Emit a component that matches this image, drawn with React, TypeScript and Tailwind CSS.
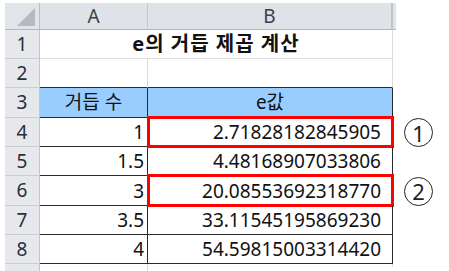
import React from "react";

const F = "font-['Noto_Sans','Noto_Sans_CJK_KR',sans-serif]";

type Row = { n: number; h: string; a?: string; b?: string; red?: boolean; mark?: string; kind: "title" | "blank" | "head" | "data" };

const rows: Row[] = [
  { n: 1, h: "h-[29px]", kind: "title" },
  { n: 2, h: "h-[29px]", kind: "blank" },
  { n: 3, h: "h-[30px]", kind: "head", a: "거듭 수", b: "e값" },
  { n: 4, h: "h-[29px]", kind: "data", a: "1", b: "2.71828182845905", red: true, mark: "1" },
  { n: 5, h: "h-[29px]", kind: "data", a: "1.5", b: "4.48168907033806" },
  { n: 6, h: "h-[30px]", kind: "data", a: "3", b: "20.08553692318770", red: true, mark: "2" },
  { n: 7, h: "h-[29px]", kind: "data", a: "3.5", b: "33.11545195869230" },
  { n: 8, h: "h-[29px]", kind: "data", a: "4", b: "54.59815003314420" },
];

function RowHead({ n, h }: { n: number; h: string }) {
  return (
    <div className={`${h} w-[35px] shrink-0 flex items-center justify-center bg-[#e6e8eb] border-r border-r-[#c3c7cc] border-b border-b-[#c9cdd2] text-[19px] text-[#27303b]`}>
      {n}
    </div>
  );
}

export default function App() {
  return (
    <div className={`w-[449px] h-[271px] bg-white overflow-hidden pl-[5px] pt-[3px] ${F}`}>
      {/* column header */}
      <div className="flex h-[27px]">
        <div className="w-[35px] shrink-0 bg-[#e1e4e8] border-r border-r-[#b9bec4] border-b border-b-[#b3b8be] relative">
          <svg className="absolute right-[4px] bottom-[3px]" width="18" height="18" viewBox="0 0 18 18">
            <polygon points="18,0 18,18 0,18" fill="#b6babf" />
          </svg>
        </div>
        <div className="w-[108px] shrink-0 bg-[#dfe2e6] border-r border-r-[#c6cace] border-b border-b-[#b3b8be] flex items-center justify-center text-[19px] text-[#3a414b]">
          A
        </div>
        <div className="w-[245px] shrink-0 bg-[#dfe2e6] border-r-[2px] border-r-[#c0c4c9] border-b border-b-[#b3b8be] flex items-center justify-center text-[19px] text-[#3a414b]">
          B
        </div>
        <div className="w-[3px] shrink-0 bg-[#dfe2e6] border-b border-b-[#b3b8be]" />
      </div>

      {rows.map((r) => (
        <div key={r.n} className="flex">
          <RowHead n={r.n} h={r.h} />
          {r.kind === "title" && (
            <div className={`${r.h} w-[353px] shrink-0 border-r border-r-[#dcdcdc] border-b border-b-[#dcdcdc] flex items-center justify-center font-bold text-[20px] text-[#111] tracking-[1px]`}>
              e의 거듭 제곱 계산
            </div>
          )}
          {r.kind === "blank" && (
            <>
              <div className={`${r.h} w-[108px] shrink-0 border-r border-r-[#dcdcdc] border-b border-b-[#2a2a2a]`} />
              <div className={`${r.h} w-[245px] shrink-0 border-r border-r-[#dcdcdc] border-b border-b-[#2a2a2a]`} />
            </>
          )}
          {r.kind === "head" && (
            <>
              <div className={`${r.h} w-[108px] shrink-0 bg-[#99ccff] border-r border-r-[#2a2a2a] border-b border-b-[#2a2a2a] flex items-center justify-center text-[19px] text-[#111]`}>
                {r.a}
              </div>
              <div className={`${r.h} w-[245px] shrink-0 bg-[#99ccff] border-r border-r-[#2a2a2a] border-b border-b-[#2a2a2a] flex items-center justify-center text-[19px] text-[#111]`}>
                {r.b}
              </div>
            </>
          )}
          {r.kind === "data" && (
            <>
              <div className={`${r.h} w-[108px] shrink-0 border-r border-r-[#2a2a2a] border-b border-b-[#2a2a2a] flex items-end justify-end pr-[3px] pb-[1px] text-[19px] leading-[26px] text-[#111]`}>
                {r.a}
              </div>
              <div className={`${r.h} w-[245px] shrink-0 relative border-r border-r-[#2a2a2a] border-b border-b-[#2a2a2a] flex items-end justify-end pr-[11px] pb-[1px] text-[19px] leading-[26px] text-[#111]`}>
                {r.b}
                {r.red && (
                  <div className="absolute left-[-1px] right-[-2px] top-[-2px] bottom-[-2px] border-[3px] border-[#ff0000]" />
                )}
              </div>
            </>
          )}
          <div className={`${r.h} flex-1 flex items-center pl-[11px]`}>
            {r.mark && (
              <div className="w-[29px] h-[29px] shrink-0 rounded-full border-[1.5px] border-[#222] flex items-center justify-center text-[22px] leading-none text-[#222]">
                {r.mark}
              </div>
            )}
          </div>
        </div>
      ))}

      {/* row 9 stub */}
      <div className="flex">
        <div className="h-[10px] w-[35px] shrink-0 bg-[#e6e8eb] border-r border-r-[#c3c7cc]" />
        <div className="h-[10px] w-[108px] shrink-0 border-r border-r-[#dcdcdc]" />
        <div className="h-[3px] w-[245px] shrink-0 border-r border-r-[#dcdcdc]" />
      </div>
    </div>
  );
}
